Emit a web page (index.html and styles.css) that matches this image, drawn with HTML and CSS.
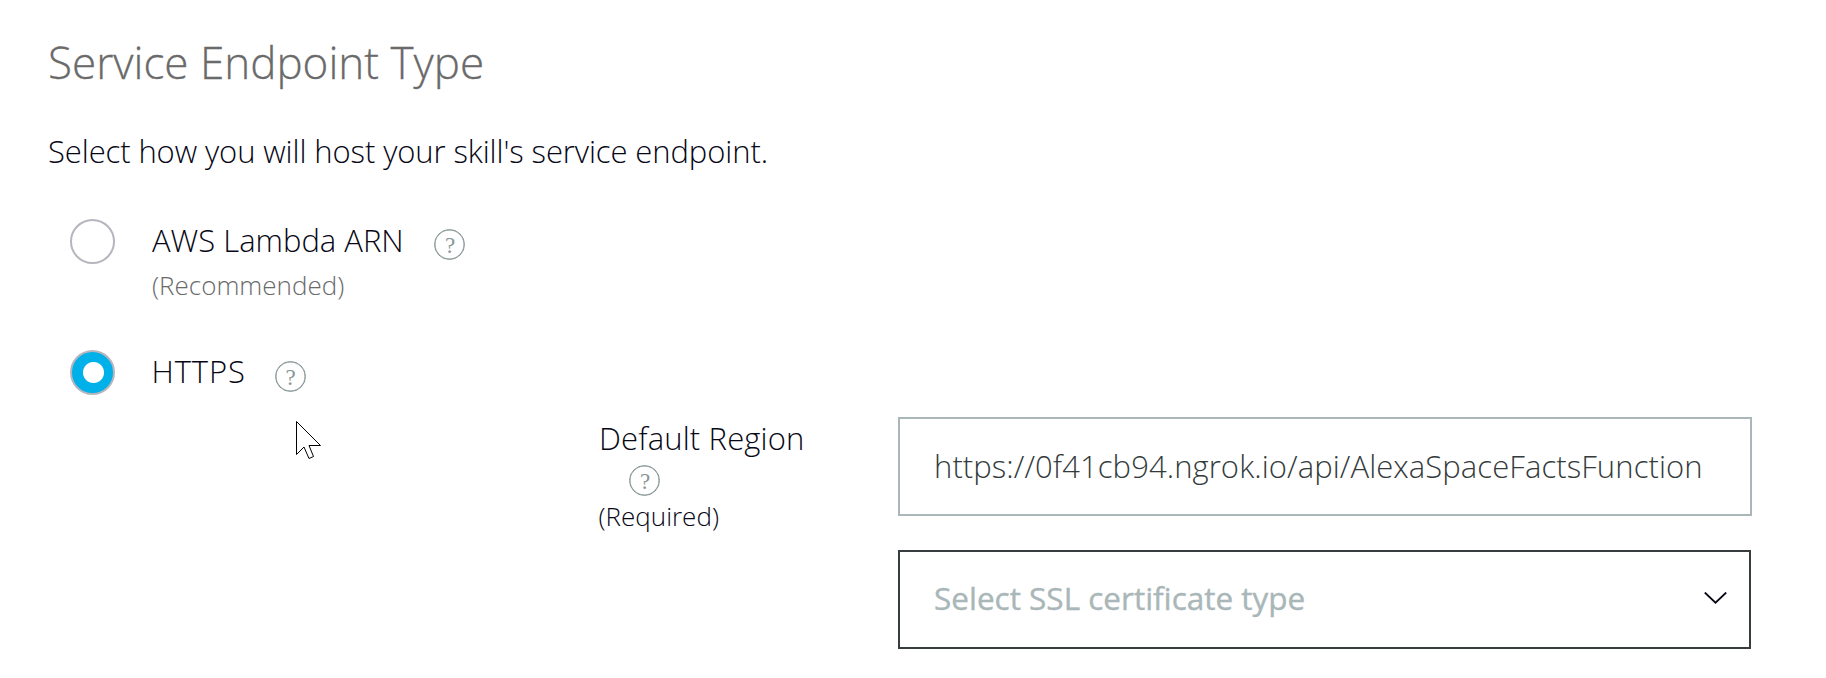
FILE: index.html
```
<!DOCTYPE html>
<html lang="en">
<head>
<meta charset="utf-8">
<title>Service Endpoint Type</title>
<link rel="stylesheet" href="styles.css">
</head>
<body>
<main class="endpoint">
  <h1 class="title">Service Endpoint Type</h1>
  <p class="intro">Select how you will host your skill's service endpoint.</p>

  <div class="option">
    <span class="radio" role="radio" aria-checked="false"></span>
    <div class="option-text">
      <div class="option-line"><span class="label label-lambda">AWS Lambda ARN</span><span class="help">?</span></div>
      <div class="note">(Recommended)</div>
    </div>
  </div>

  <div class="option option-https">
    <span class="radio radio-checked" role="radio" aria-checked="true"></span>
    <div class="option-text">
      <div class="option-line"><span class="label label-https">HTTPS</span><span class="help help-low">?</span></div>
    </div>
  </div>

  <div class="region">
    <div class="region-label">
      <span class="label label-region">Default Region</span>
      <span class="help help-region">?</span>
      <span class="required">(Required)</span>
    </div>
    <div class="fields">
      <div class="field field-url">https://0f41cb94.ngrok.io/api/AlexaSpaceFactsFunction</div>
      <div class="field field-select">
        <span>Select SSL certificate type</span>
        <svg class="chevron" viewBox="0 0 23 12"><path d="M.8.5 11.5 10.7 22.2.5"/></svg>
      </div>
    </div>
  </div>

  <svg class="cursor" viewBox="0 0 26 40"><path d="M.5.5V33.500L8 26l5 11.500 4.500-2L13 24.500H24.500Z"/></svg>
</main>
</body>
</html>
```
FILE: styles.css
```
* { box-sizing: border-box; }

body {
  margin: 0;
  background: #fff;
  color: #070716;
  font: 300 31px/42px "Open Sans", "Noto Sans", sans-serif;
}

.endpoint {
  position: relative;
  height: 678px;
  padding: 32px 0 0 48px;
  white-space: nowrap;
}

.title {
  margin: 0;
  color: #6a6a6a;
  font-size: 44px;
  font-weight: 300;
  line-height: 60px;
  -webkit-text-stroke: 0.3px #6a6a6a;
}

.intro {
  margin: 38px 0 47px;
  letter-spacing: -0.1px;
}

.option {
  display: flex;
  gap: 37px;
  height: 84px;
  padding-left: 22px;
}

.option-https {
  height: 45px;
  margin-top: 47px;
}

.radio {
  flex: none;
  width: 45px;
  height: 45px;
  border: 2px solid #b7b6be;
  border-radius: 50%;
}

.radio-checked {
  background: radial-gradient(circle at 21.500px 20.500px, #fff 10px, #00b0e8 11px);
}

.option-line {
  display: flex;
  align-items: flex-start;
}

.label-lambda { width: 282px; }
.label-https { width: 123px; margin-left: -0.5px; letter-spacing: 0.9px; }
.label-region { margin-left: 1px; letter-spacing: 0.15px; }

.help {
  flex: none;
  width: 31px;
  height: 31px;
  margin-top: 10px;
  padding-left: 1px;
  border: 1px solid #879596;
  border-radius: 50%;
  box-shadow: inset 0 0 0 0.5px #879596;
  color: #879596;
  font: 23px/32px "Liberation Serif", serif;
  text-align: center;
}

.help-low { margin-top: 11px; }

.note {
  margin-top: 6px;
  color: #6a6a6a;
  font-size: 26px;
  line-height: 36px;
}

.region {
  display: flex;
  margin-top: 22px;
  padding-left: 550px;
}

.region-label {
  display: flex;
  flex-direction: column;
  width: 300px;
}

.help-region { margin: 6px 0 2px 31px; }

.required {
  margin-left: 0.5px;
  font-size: 26px;
  line-height: 36px;
}

.fields {
  display: flex;
  flex-direction: column;
  gap: 34px;
}

.field {
  display: flex;
  align-items: center;
  justify-content: space-between;
  width: 854px;
  height: 99px;
  padding: 0 22px 2px 34px;
  border: 2px solid #a9b7b8;
  color: #343b3c;
  letter-spacing: 0.08px;
}

.field-select {
  width: 853px;
  padding-bottom: 3px;
  border-color: #373d3e;
  color: #a9b7b8;
  font-size: 31.500px;
  font-weight: 500;
  letter-spacing: normal;
  -webkit-text-stroke: 0.4px #a9b7b8;
}

.chevron {
  width: 23px;
  height: 12px;
  fill: none;
  stroke: #070716;
  stroke-width: 1.800;
}

.cursor {
  position: absolute;
  top: 421px;
  left: 296px;
  width: 26px;
  height: 40px;
  fill: #fff;
  stroke: #000;
  stroke-width: 1;
}
```
